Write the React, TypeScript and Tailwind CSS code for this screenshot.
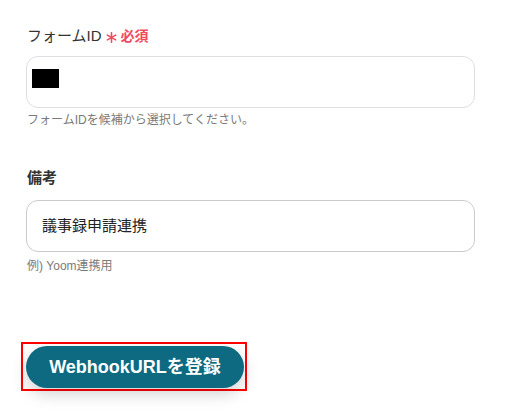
export default function App() {
  return (
    <div className="min-h-screen bg-white font-['Liberation_Sans','Noto_Sans_CJK_JP',sans-serif] text-[#333333]">
      <div className="pl-[26px] pt-[24px]">
        {/* Form ID */}
        <div className="flex items-center h-[24px] pl-[1px]">
          <span className="text-[15px]">フォームID</span>
          <svg viewBox="0 0 12 12" className="ml-[4px] mt-[2px] w-[11px] h-[11px] text-[#ef4b5f]" stroke="currentColor" strokeWidth="1.7" strokeLinecap="round">
            <line x1="6" y1="0.8" x2="6" y2="11.2" />
            <line x1="1.5" y1="3.4" x2="10.5" y2="8.6" />
            <line x1="1.5" y1="8.6" x2="10.5" y2="3.4" />
          </svg>
          <span className="ml-[4px] text-[14px] font-bold text-[#ef4b5f]">必須</span>
        </div>
        <div className="mt-[8px] w-[449px] h-[52px] rounded-[12px] border border-[#dedfe5] bg-white pl-[5px] pt-[12px]">
          <div className="w-[27px] h-[19px] bg-black" />
        </div>
        <p className="mt-[4px] pl-[1px] text-[12px] leading-[16px] text-[#7a7a7a]">
          フォームIDを候補から選択してください。
        </p>

        {/* Notes */}
        <div className="mt-[38px] h-[24px] pl-[1px] flex items-center">
          <span className="text-[15px] font-bold">備考</span>
        </div>
        <div className="mt-[10px] w-[449px] h-[52px] rounded-[12px] border border-[#cbcbcb] bg-white flex items-center pl-[15px]">
          <span className="text-[15px] text-[#222222]">議事録申請連携</span>
        </div>
        <p className="mt-[6px] pl-[1px] text-[12px] leading-[16px] text-[#7a7a7a]">例) Yoom連携用</p>

        {/* Submit */}
        <div className="mt-[68px] -ml-[5px] inline-block border-2 border-[#ff0000] pl-[3px] pr-px pt-[2px] pb-px">
          <button className="w-[218px] h-[42px] rounded-full bg-[#0d6a80] text-white text-[18px] font-bold shadow-[0_6px_16px_rgba(0,0,0,0.18)]">
            WebhookURLを登録
          </button>
        </div>
      </div>
    </div>
  );
}
